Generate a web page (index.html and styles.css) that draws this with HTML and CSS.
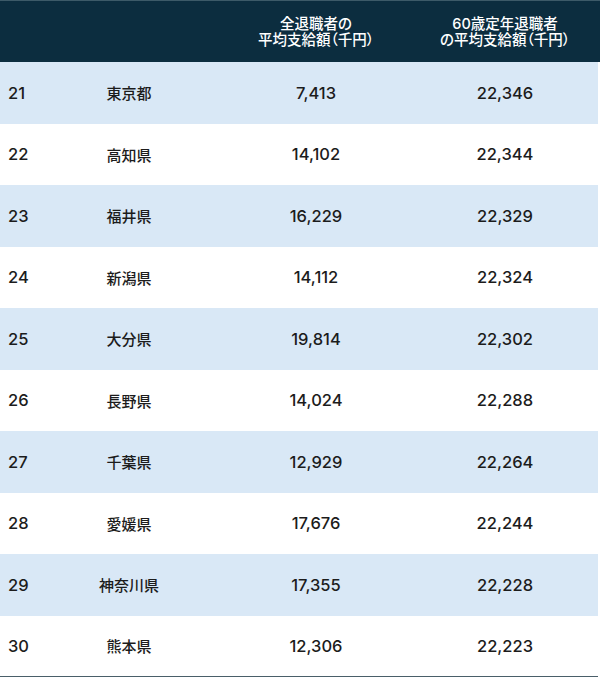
FILE: index.html
```html
<!DOCTYPE html>
<html lang="ja">
<head>
<meta charset="utf-8">
<link rel="stylesheet" href="styles.css">
</head>
<body>
<div class="table">
  <div class="head">
    <div class="cell c1"></div>
    <div class="cell c2"></div>
    <div class="cell c3">全退職者の<br>平均支給額（千円）</div>
    <div class="cell c4">60歳定年退職者<br>の平均支給額（千円）</div>
  </div>
  <div class="row alt"><div class="cell c1 num">21</div><div class="cell c2">東京都</div><div class="cell c3 num">7,413</div><div class="cell c4 num">22,346</div></div>
  <div class="row"><div class="cell c1 num">22</div><div class="cell c2">高知県</div><div class="cell c3 num">14,102</div><div class="cell c4 num">22,344</div></div>
  <div class="row alt"><div class="cell c1 num">23</div><div class="cell c2">福井県</div><div class="cell c3 num">16,229</div><div class="cell c4 num">22,329</div></div>
  <div class="row"><div class="cell c1 num">24</div><div class="cell c2">新潟県</div><div class="cell c3 num">14,112</div><div class="cell c4 num">22,324</div></div>
  <div class="row alt"><div class="cell c1 num">25</div><div class="cell c2">大分県</div><div class="cell c3 num">19,814</div><div class="cell c4 num">22,302</div></div>
  <div class="row"><div class="cell c1 num">26</div><div class="cell c2">長野県</div><div class="cell c3 num">14,024</div><div class="cell c4 num">22,288</div></div>
  <div class="row alt"><div class="cell c1 num">27</div><div class="cell c2">千葉県</div><div class="cell c3 num">12,929</div><div class="cell c4 num">22,264</div></div>
  <div class="row"><div class="cell c1 num">28</div><div class="cell c2">愛媛県</div><div class="cell c3 num">17,676</div><div class="cell c4 num">22,244</div></div>
  <div class="row alt"><div class="cell c1 num">29</div><div class="cell c2">神奈川県</div><div class="cell c3 num">17,355</div><div class="cell c4 num">22,228</div></div>
  <div class="row last"><div class="cell c1 num">30</div><div class="cell c2">熊本県</div><div class="cell c3 num">12,306</div><div class="cell c4 num">22,223</div></div>
</div>
</body>
</html>
```
FILE: styles.css
```css
html, body {
  margin: 0;
  padding: 0;
  background: #ffffff;
}
body {
  font-family: "Inter", "Noto Sans CJK JP", sans-serif;
  color: #1c1c1c;
  width: 600px;
  height: 677px;
  overflow: hidden;
}
.table {
  display: flex;
  flex-direction: column;
}
.head, .row {
  display: grid;
  grid-template-columns: 58px 142px 232px 1fr;
  align-items: center;
}
.head {
  height: 61px;
  background: #0c2d3f;
  border-top: 1px solid #3d5a68;
  color: #ffffff;
  font-size: 14.5px;
  line-height: 16px;
  font-weight: 500;
  font-feature-settings: "palt";
}
.head .cell.c4 {
  padding-right: 22px;
}
.row {
  height: 61.5px;
  font-size: 15px;
  font-weight: 500;
  margin-right: 2px;
}
.row .cell.c4 {
  padding-right: 20px;
}
.row.alt {
  background: #d9e8f6;
}
.row.last {
  height: 60.5px;
  border-bottom: 1px solid #4a5f69;
}
.cell {
  text-align: center;
  white-space: nowrap;
}
.cell.c1 {
  text-align: left;
  padding-left: 8px;
}
.num {
  font-size: 16.5px;
  font-weight: 500;
}
```
